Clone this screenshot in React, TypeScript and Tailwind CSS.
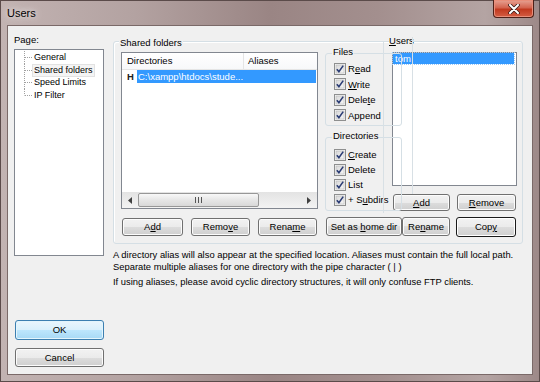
import React from "react";

const ui = "font-['Liberation_Sans',Arial,sans-serif]";

function U({ children }: { children: React.ReactNode }) {
  return <span className="underline underline-offset-[1px]">{children}</span>;
}

function Btn({
  children,
  className = "",
  kind = "normal",
}: {
  children: React.ReactNode;
  className?: string;
  kind?: "normal" | "focus" | "default";
}) {
  const look =
    kind === "focus"
      ? "border-[#3c7fb1] bg-[linear-gradient(#eaf6fd_0%,#d9f0fc_50%,#bee6fd_50%,#a7d9f5_100%)] shadow-[inset_0_0_0_1px_#e4f5fc]"
      : kind === "default"
        ? "border-[#1a1a1a] bg-[linear-gradient(#f2f2f2_0%,#ebebeb_50%,#dddddd_50%,#cfcfcf_100%)] shadow-[inset_0_0_0_1px_#ffffff]"
        : "border-[#707070] bg-[linear-gradient(#f2f2f2_0%,#ebebeb_50%,#dddddd_50%,#cfcfcf_100%)] shadow-[inset_0_0_0_1px_#fcfcfc]";
  return (
    <div
      className={`flex shrink-0 items-center justify-center rounded-[3px] border text-[9.5px] leading-none text-black ${look} ${className}`}
    >
      <span className="whitespace-pre">{children}</span>
    </div>
  );
}

function Check({ children }: { children: React.ReactNode }) {
  return (
    <div className="flex h-[15.5px] items-center">
      <svg width="12" height="12" viewBox="0 0 12 12" className="shrink-0">
        <defs>
          <linearGradient id="cbg" x1="0" y1="0" x2="1" y2="1">
            <stop offset="0" stopColor="#d8d8d8" />
            <stop offset="1" stopColor="#f6f6f6" />
          </linearGradient>
        </defs>
        <rect x="0.5" y="0.5" width="11" height="11" fill="#f4f4f4" stroke="#8e8f8f" />
        <rect x="2" y="2" width="8" height="8" fill="url(#cbg)" stroke="#b0b0b0" strokeWidth="0.5" />
        <path d="M2.8 6.2 L4.9 8.6 L9.2 2.6" fill="none" stroke="#2b3c74" strokeWidth="1.6" />
      </svg>
      <span className="ml-[2px] text-[9.5px] leading-none text-black">{children}</span>
    </div>
  );
}

function TreeItem({ label, last = false, selected = false }: { label: string; last?: boolean; selected?: boolean }) {
  return (
    <div className="flex h-[12.7px] items-center pl-[9px]">
      <svg width="9" height="13" viewBox="0 0 9 13" className="shrink-0">
        <line x1="0.5" y1="0" x2="0.5" y2={last ? 6.5 : 13} stroke="#a0a0a0" strokeDasharray="1 1" />
        <line x1="1" y1="6.5" x2="8" y2="6.5" stroke="#a0a0a0" strokeDasharray="1 1" />
      </svg>
      <span
        className={`px-[1px] text-[9px] leading-[11px] text-black ${selected ? "bg-[#f4f4f4] outline outline-[#e2e2e2]" : ""}`}
      >
        {label}
      </span>
    </div>
  );
}

function GroupLabel({ children }: { children: React.ReactNode }) {
  return (
    <div className="-mt-[8px] flex h-[12px] items-center pl-[6px]">
      <span className="bg-[#f0f0f0] px-[1px] text-[9.5px] leading-none text-black">{children}</span>
    </div>
  );
}

export default function App() {
  return (
    <div className={`${ui} h-[382px] w-[540px] overflow-hidden select-none`}>
      <div className="flex h-full w-full flex-col border border-[#5b4b4a] bg-[linear-gradient(90deg,#c2b3b2_0%,#b3a2a1_25%,#9a8584_50%,#a38f8e_70%,#b4a4a3_90%,#9d8988_100%)]">
        {/* title bar */}
        <div className="flex h-[24px] shrink-0 items-start justify-between">
          <div className="pl-[6px] pt-[5px] text-[11px] leading-[14px] text-black [text-shadow:0_0_5px_#e8e0e0,0_0_8px_#e8e0e0]">
            Users
          </div>
          <div className="-mt-[1px] mr-[5px] flex h-[18px] w-[41px] items-center justify-center rounded-b-[4px] border border-t-0 border-[#4d2018] bg-[linear-gradient(#e7a394_0%,#d3644f_45%,#c1391f_55%,#d45d43_100%)] shadow-[inset_0_0_0_1px_#e88e7a]">
            <svg width="12" height="10" viewBox="0 0 12 10">
              <path d="M2 1 L10 9 M10 1 L2 9" stroke="#3a1c18" strokeWidth="3.6" strokeLinecap="round" />
              <path d="M2 1 L10 9 M10 1 L2 9" stroke="#ffffff" strokeWidth="2" strokeLinecap="round" />
            </svg>
          </div>
        </div>

        {/* client area */}
        <div className="mx-[6px] flex h-[350px] w-[526px] shrink-0 border border-[#7a6968] bg-[#f0f0f0]">
          {/* left column */}
          <div className="ml-[6px] flex w-[90px] shrink-0 flex-col">
            <div className="pt-[8px] text-[9.5px] leading-[12px] text-black">Page:</div>
            <div className="mt-[3px] h-[207px] border border-[#828790] bg-white pt-[1px]">
              <TreeItem label="General" />
              <TreeItem label="Shared folders" selected />
              <TreeItem label="Speed Limits" />
              <TreeItem label="IP Filter" last />
            </div>
            <Btn kind="focus" className="ml-[1px] mt-[64px] h-[20px] w-[89px]">
              OK
            </Btn>
            <Btn className="ml-[1px] mt-[8px] h-[19px] w-[89px]">Cancel</Btn>
          </div>

          {/* main column */}
          <div className="ml-[9px] flex flex-col">
            <div className="relative mt-[15px] flex h-[203px] w-[410px] flex-col rounded-[3px] border border-[#d5dfe5] shadow-[inset_1px_1px_0_#ffffff]">
              {/* labels on the top border */}
              <div className="-mt-[7px] flex h-[12px] items-center">
                <div className="w-[275px] pl-[5px]">
                  <span className="bg-[#f0f0f0] px-[1px] text-[9.5px] leading-none text-black">Shared folders</span>
                </div>
                <span className="bg-[#f0f0f0] text-[9.5px] leading-none text-black">
                  <U>U</U>sers
                </span>
              </div>

              {/* ghost group lines */}
              <div className="pointer-events-none absolute left-[269px] top-0 z-20 h-[171px] border-l border-[#d8e0e5]" />
              <div className="pointer-events-none absolute left-[298px] -top-[5px] z-20 h-[157px] border-l border-[#d8e0e5]" />

              {/* row A */}
              <div className="mt-[5px] flex pl-[7px]">
                {/* directory list */}
                <div className="flex h-[157px] w-[197px] shrink-0 flex-col border border-[#828790] bg-white">
                  <div className="flex h-[17px] shrink-0 border-b border-[#e5e5e5] bg-[linear-gradient(#ffffff,#f7f8fa)] text-[9.5px] text-black">
                    <div className="flex w-[122px] items-center border-r border-[#e5e5e5] pl-[5px]">Directories</div>
                    <div className="flex items-center pl-[4px]">Aliases</div>
                  </div>
                  <div className="flex h-[13px] items-center">
                    <span className="w-[15px] pl-[5px] text-[9.5px] font-bold leading-none text-[#202020]">H</span>
                    <div className="mr-[1px] flex h-full flex-1 items-center bg-[#3399ff] pl-[1px] text-[9.5px] leading-none text-white">
                      C:\xampp\htdocs\stude...
                    </div>
                  </div>
                  <div className="mt-auto flex h-[16px] items-center bg-[linear-gradient(#e3e3e3,#f3f3f3)]">
                    <div className="flex w-[16px] items-center justify-center">
                      <svg width="4" height="7" viewBox="0 0 4 7">
                        <path d="M4 0 L0 3.5 L4 7 Z" fill="#404040" />
                      </svg>
                    </div>
                    <div className="flex h-[14px] w-[121px] items-center justify-center rounded-[2px] border border-[#979797] bg-[linear-gradient(#f8f8f8,#e6e6e6_50%,#d8d8d8)]">
                      <svg width="7" height="6" viewBox="0 0 7 6">
                        <path d="M0.5 0 V6 M3.5 0 V6 M6.5 0 V6" stroke="#555" strokeWidth="1" />
                      </svg>
                    </div>
                    <div className="ml-auto flex w-[16px] items-center justify-center">
                      <svg width="4" height="7" viewBox="0 0 4 7">
                        <path d="M0 0 L4 3.5 L0 7 Z" fill="#404040" />
                      </svg>
                    </div>
                  </div>
                </div>

                {/* permissions */}
                <div className="relative z-10 ml-[7px] flex w-[77px] shrink-0 flex-col">
                  <div className="mt-[1px] flex flex-col rounded-[3px] border border-[#d5dfe5] pb-[2px] pl-[8px]">
                    <div className="-ml-[8px]">
                      <GroupLabel>Files</GroupLabel>
                    </div>
                    <div className="mt-[3px]">
                      <Check>
                        R<U>e</U>ad
                      </Check>
                      <Check>
                        <U>W</U>rite
                      </Check>
                      <Check>
                        Dele<U>t</U>e
                      </Check>
                      <Check>Append</Check>
                    </div>
                  </div>
                  <div className="mt-[11px] flex flex-col rounded-[3px] border border-[#d5dfe5] pb-[3px] pl-[8px]">
                    <div className="-ml-[8px]">
                      <GroupLabel>Directories</GroupLabel>
                    </div>
                    <div className="mt-[5px] [&>div]:h-[15px]">
                      <Check>
                        <U>C</U>reate
                      </Check>
                      <Check>Delete</Check>
                      <Check>List</Check>
                      <Check>
                        + S<U>u</U>bdirs
                      </Check>
                    </div>
                  </div>
                </div>

                {/* users */}
                <div className="-ml-[10px] flex w-[125px] shrink-0 flex-col">
                  <div className="h-[134px] border border-[#828790] bg-white">
                    <div className="mr-[2px] flex h-[11px] items-center bg-[#3399ff] pl-[2px] text-[9.5px] leading-none text-white outline-1 outline-dotted outline-[#9cc9f7]">
                      tom
                    </div>
                  </div>
                  <div className="mt-[8px] flex">
                    <Btn className="ml-[1px] h-[17px] w-[57px]">
                      <U>A</U>dd
                    </Btn>
                    <Btn className="ml-[7px] h-[17px] w-[59px]">
                      <U>R</U>emove
                    </Btn>
                  </div>
                </div>
              </div>

              {/* row B */}
              <div className="mt-[6px] flex items-start pl-[8px]">
                <Btn className="mt-[1px] h-[18px] w-[61px]">
                  A<U>d</U>d
                </Btn>
                <Btn className="ml-[8px] mt-[1px] h-[18px] w-[59px]">
                  Remo<U>v</U>e
                </Btn>
                <Btn className="ml-[8px] mt-[1px] h-[18px] w-[59px]">
                  Rena<U>m</U>e
                </Btn>
                <Btn className="ml-[9px] h-[19px] w-[76px]">
                  Set as <U>h</U>ome dir
                </Btn>
                <Btn className="h-[19px] w-[48px]">
                  Re<U>n</U>ame
                </Btn>
                <Btn kind="default" className="ml-[6px] h-[20px] w-[60px]">
                  Cop<U>y</U>
                </Btn>
              </div>
            </div>

            {/* help text */}
            <div className="mt-[5px] text-[9.4px] leading-[12px] text-black">
              <div>A directory alias will also appear at the specified location. Aliases must contain the full local path.</div>
              <div>Separate multiple aliases for one directory with the pipe character ( | )</div>
              <div className="mt-[3px]">
                If using aliases, please avoid cyclic directory structures, it will only confuse FTP clients.
              </div>
            </div>
          </div>
        </div>
      </div>
    </div>
  );
}
